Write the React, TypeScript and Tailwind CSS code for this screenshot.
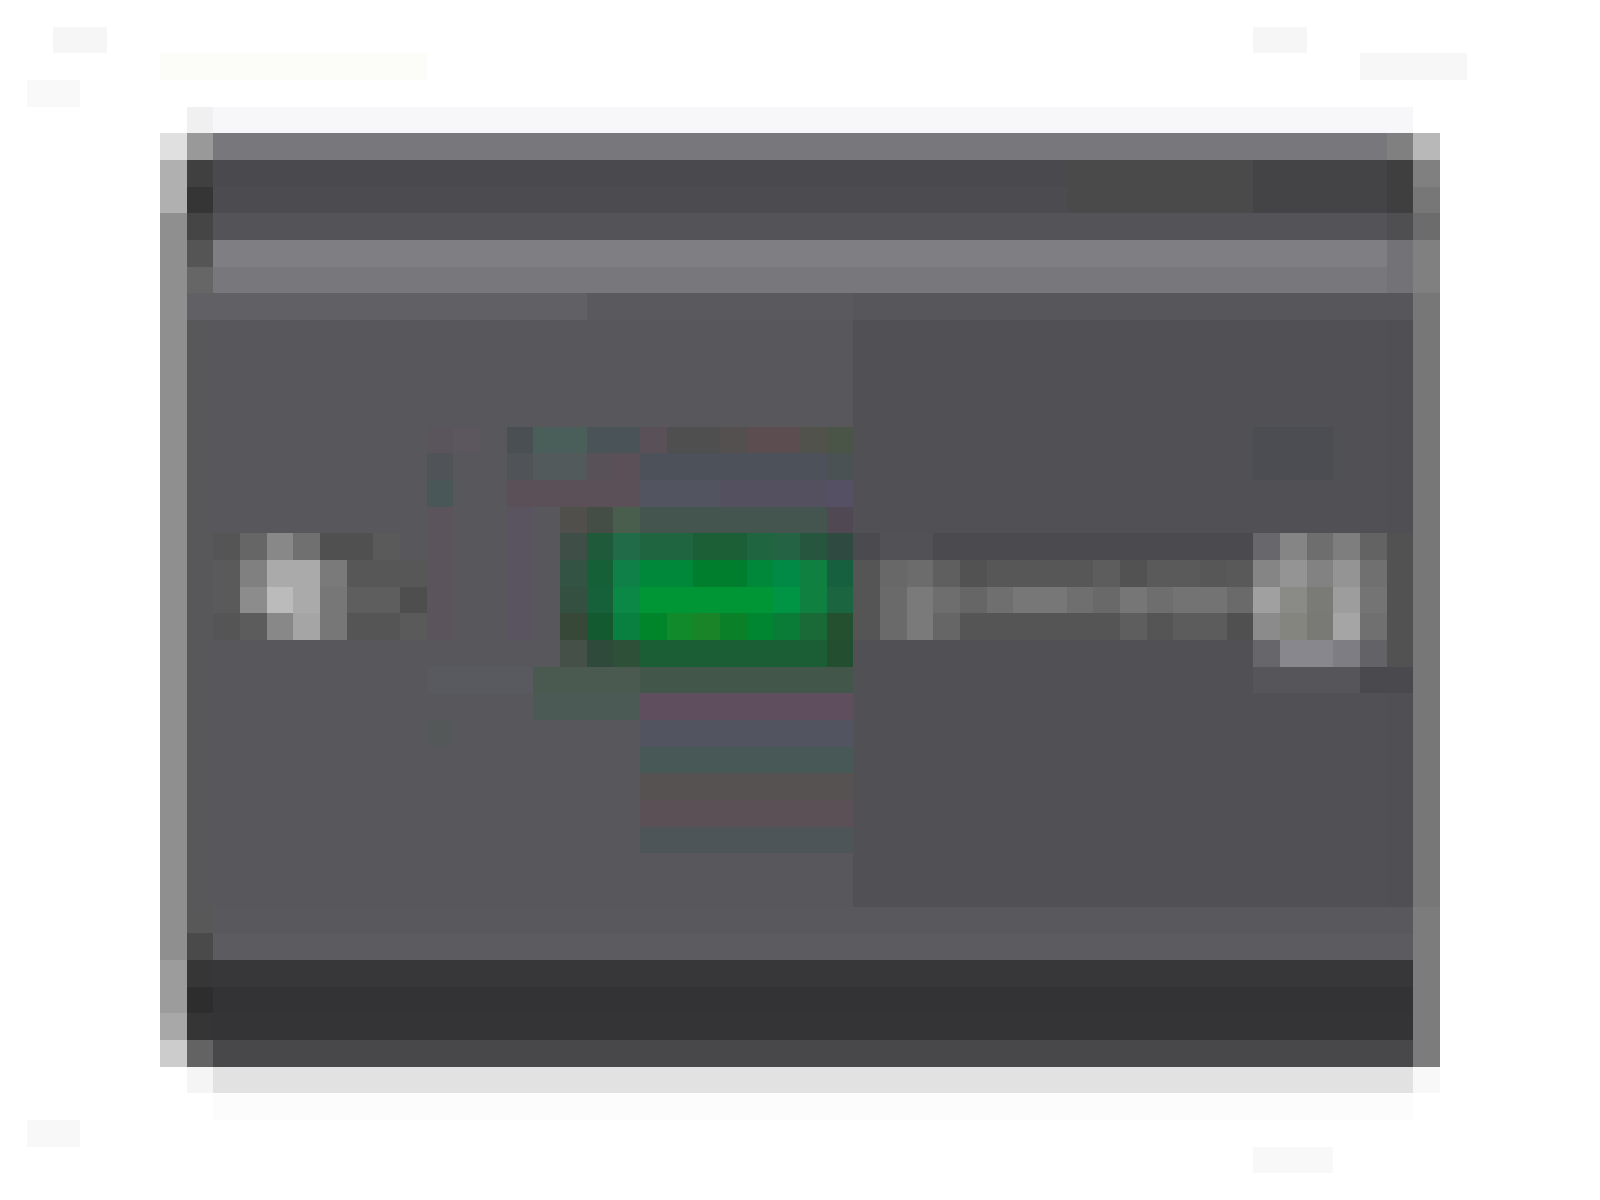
import React from 'react';

// The picture is a 60 x 45 pixel icon blown up to 1600 x 1200,
// so every "pixel" is one cell of a 60 x 45 grid.
const cells: string[] = [
    // faint specks on the white page
    'col-[3/5] row-[2/3] bg-[#f6f6f6]',
    'col-[7/17] row-[3/4] bg-[#fcfcf9]',
    'col-[2/4] row-[4/5] bg-[#f9f9f9]',
    'col-[48/50] row-[2/3] bg-[#f6f6f6]',
    'col-[52/56] row-[3/4] bg-[#f7f7f7]',
    'col-[8/54] row-[5/6] bg-[#f7f7f9]',
    'col-[8/9] row-[5/6] bg-[#f0f0f0]',
    'col-[2/4] row-[43/44] bg-[#f8f8f8]',
    'col-[48/51] row-[44/45] bg-[#f8f8f8]',

    // frame body
    'col-[7/55] row-[6/41] bg-[#56555a]',

    // top edge and title bar
    'col-[8/54] row-[6/7] bg-[#78777c]',
    'col-[8/53] row-[7/8] bg-[#4a4a4e]',
    'col-[8/53] row-[8/9] bg-[#4c4c50]',
    'col-[41/48] row-[7/9] bg-[#4a4a4b]',
    'col-[48/53] row-[7/9] bg-[#444446]',
    'col-[8/53] row-[9/10] bg-[#545358]',
    'col-[8/53] row-[10/11] bg-[#7f7e83]',
    'col-[8/53] row-[11/12] bg-[#78777c]',
    'col-[8/23] row-[12/13] bg-[#606065]',
    'col-[23/33] row-[12/13] bg-[#5a5a5e]',
    'col-[33/54] row-[12/13] bg-[#57575b]',

    // main panel
    'col-[8/33] row-[13/35] bg-[#58585c]',
    'col-[33/54] row-[13/35] bg-[#505055]',

    // bottom bands
    'col-[8/54] row-[35/36] bg-[#59595d]',
    'col-[8/54] row-[36/37] bg-[#5c5c60]',
    'col-[8/54] row-[37/38] bg-[#37373a]',
    'col-[8/54] row-[38/39] bg-[#333336]',
    'col-[8/54] row-[39/40] bg-[#343437]',
    'col-[8/54] row-[40/41] bg-[#48484b]',

    // shadow under the frame
    'col-[9/54] row-[41/42] bg-[#e2e2e2]',
    'col-[8/9] row-[41/42] bg-[#f5f5f5]',
    'col-[9/54] row-[42/43] bg-[#fcfcfc]',

    // left outer edge
    'col-[7/8] row-[6/41] bg-[#8f8f8f]',
    'col-[7/8] row-[6/7] bg-[#e0e0e0]',
    'col-[7/8] row-[7/9] bg-[#b0b0b0]',
    'col-[7/8] row-[37/39] bg-[#9c9c9c]',
    'col-[7/8] row-[39/40] bg-[#a8a8a8]',
    'col-[7/8] row-[40/41] bg-[#cccccc]',

    // left inner edge
    'col-[8/9] row-[13/35] bg-[#58585a]',
    'col-[8/9] row-[6/7] bg-[#999999]',
    'col-[8/9] row-[7/8] bg-[#404040]',
    'col-[8/9] row-[8/9] bg-[#353535]',
    'col-[8/9] row-[9/10] bg-[#454545]',
    'col-[8/9] row-[10/11] bg-[#555555]',
    'col-[8/9] row-[11/12] bg-[#666666]',
    'col-[8/9] row-[35/36] bg-[#585858]',
    'col-[8/9] row-[36/37] bg-[#4a4a4a]',
    'col-[8/9] row-[37/38] bg-[#363636]',
    'col-[8/9] row-[38/39] bg-[#2d2d2d]',
    'col-[8/9] row-[39/40] bg-[#353535]',
    'col-[8/9] row-[40/41] bg-[#636363]',

    // right inner edge
    'col-[53/54] row-[6/7] bg-[#808080]',
    'col-[53/54] row-[7/9] bg-[#3f3f3f]',
    'col-[53/54] row-[9/10] bg-[#4f4f51]',
    'col-[53/54] row-[10/12] bg-[#737276]',
    'col-[53/54] row-[13/35] bg-[#505054]',

    // right outer edge
    'col-[54/55] row-[6/41] bg-[#777777]',
    'col-[54/55] row-[6/7] bg-[#b8b8b8]',
    'col-[54/55] row-[7/8] bg-[#808080]',
    'col-[54/55] row-[9/10] bg-[#6c6c6c]',
    'col-[54/55] row-[10/12] bg-[#808080]',
    'col-[54/55] row-[35/41] bg-[#7c7c7c]',
    'col-[54/55] row-[41/42] bg-[#f8f8f8]',

    // halo above the green block
    'col-[17/18] row-[17/18] bg-[#5a545c]',
    'col-[18/19] row-[17/18] bg-[#5c565e]',
    'col-[20/21] row-[17/18] bg-[#4a4f53]',
    'col-[21/23] row-[17/18] bg-[#4a5e5a]',
    'col-[23/25] row-[17/18] bg-[#4a5458]',
    'col-[25/26] row-[17/18] bg-[#5a5058]',
    'col-[26/28] row-[17/18] bg-[#4f4f4f]',
    'col-[28/29] row-[17/18] bg-[#555050]',
    'col-[29/31] row-[17/18] bg-[#5c4e50]',
    'col-[31/32] row-[17/18] bg-[#52524c]',
    'col-[32/33] row-[17/18] bg-[#4a5548]',
    'col-[17/18] row-[18/19] bg-[#505459]',
    'col-[20/21] row-[18/19] bg-[#505458]',
    'col-[21/23] row-[18/19] bg-[#525a5c]',
    'col-[23/24] row-[18/19] bg-[#585258]',
    'col-[24/25] row-[18/19] bg-[#5c5058]',
    'col-[25/32] row-[18/19] bg-[#4d5159]',
    'col-[32/33] row-[18/19] bg-[#4a5254]',
    'col-[17/18] row-[19/20] bg-[#4a5758]',
    'col-[20/25] row-[19/20] bg-[#5c5058]',
    'col-[25/28] row-[19/20] bg-[#525560]',
    'col-[28/32] row-[19/20] bg-[#545060]',
    'col-[32/33] row-[19/20] bg-[#565065]',
    'col-[17/18] row-[20/25] bg-[#5c545c]',
    'col-[20/21] row-[20/25] bg-[#5a5460]',

    // green block
    'col-[22/23] row-[20/21] bg-[#504f4c]',
    'col-[23/24] row-[20/21] bg-[#454d47]',
    'col-[24/25] row-[20/21] bg-[#4a5e4e]',
    'col-[25/32] row-[20/21] bg-[#445550]',
    'col-[32/33] row-[20/21] bg-[#504853]',

    'col-[22/23] row-[21/22] bg-[#3f4f47]',
    'col-[23/24] row-[21/22] bg-[#1f5a3b]',
    'col-[24/25] row-[21/22] bg-[#226b48]',
    'col-[25/27] row-[21/22] bg-[#1e6540]',
    'col-[27/29] row-[21/22] bg-[#1c5e35]',
    'col-[29/30] row-[21/22] bg-[#1f6640]',
    'col-[30/31] row-[21/22] bg-[#246445]',
    'col-[31/32] row-[21/22] bg-[#27563f]',
    'col-[32/33] row-[21/22] bg-[#2f4a40]',

    'col-[22/23] row-[22/23] bg-[#335444]',
    'col-[23/24] row-[22/23] bg-[#166038]',
    'col-[24/25] row-[22/23] bg-[#0e8048]',
    'col-[25/27] row-[22/23] bg-[#00883a]',
    'col-[27/29] row-[22/23] bg-[#007e2d]',
    'col-[29/30] row-[22/23] bg-[#00883a]',
    'col-[30/31] row-[22/23] bg-[#008a45]',
    'col-[31/32] row-[22/23] bg-[#108040]',
    'col-[32/33] row-[22/23] bg-[#166040]',

    'col-[22/23] row-[23/24] bg-[#335040]',
    'col-[23/24] row-[23/24] bg-[#16603a]',
    'col-[24/25] row-[23/24] bg-[#0b8845]',
    'col-[25/30] row-[23/24] bg-[#009535]',
    'col-[30/31] row-[23/24] bg-[#009545]',
    'col-[31/32] row-[23/24] bg-[#108040]',
    'col-[32/33] row-[23/24] bg-[#1b6640]',

    'col-[22/23] row-[24/25] bg-[#384838]',
    'col-[23/24] row-[24/25] bg-[#135a30]',
    'col-[24/25] row-[24/25] bg-[#0a8040]',
    'col-[25/26] row-[24/25] bg-[#00852a]',
    'col-[26/27] row-[24/25] bg-[#108a2a]',
    'col-[27/28] row-[24/25] bg-[#1a8528]',
    'col-[28/29] row-[24/25] bg-[#0a8028]',
    'col-[29/30] row-[24/25] bg-[#008530]',
    'col-[30/31] row-[24/25] bg-[#0a7c38]',
    'col-[31/32] row-[24/25] bg-[#1a6a38]',
    'col-[32/33] row-[24/25] bg-[#245030]',

    'col-[22/23] row-[25/26] bg-[#455048]',
    'col-[23/24] row-[25/26] bg-[#2f4a3a]',
    'col-[24/25] row-[25/26] bg-[#2e5038]',
    'col-[25/32] row-[25/26] bg-[#1b5e35]',
    'col-[32/33] row-[25/26] bg-[#234f30]',

    // halo below the green block
    'col-[17/21] row-[26/27] bg-[#585a60]',
    'col-[21/25] row-[26/27] bg-[#4a5a50]',
    'col-[25/33] row-[26/27] bg-[#42574a]',
    'col-[21/25] row-[27/28] bg-[#4c5a55]',
    'col-[25/33] row-[27/28] bg-[#5e4e5e]',
    'col-[17/18] row-[28/29] bg-[#545858]',
    'col-[25/33] row-[28/29] bg-[#525560]',
    'col-[25/33] row-[29/30] bg-[#485856]',
    'col-[25/33] row-[30/31] bg-[#575252]',
    'col-[25/33] row-[31/32] bg-[#5a5055]',
    'col-[25/33] row-[32/33] bg-[#4e5558]',

    // left knob
    'col-[9/10] row-[21/22] bg-[#555555]',
    'col-[10/11] row-[21/22] bg-[#666666]',
    'col-[11/12] row-[21/22] bg-[#888888]',
    'col-[12/13] row-[21/22] bg-[#707070]',
    'col-[13/15] row-[21/22] bg-[#505050]',
    'col-[15/16] row-[21/22] bg-[#5a5a5a]',
    'col-[9/10] row-[22/23] bg-[#5a5a5a]',
    'col-[10/11] row-[22/23] bg-[#808080]',
    'col-[11/13] row-[22/23] bg-[#aaaaaa]',
    'col-[13/14] row-[22/23] bg-[#7a7a7a]',
    'col-[14/17] row-[22/23] bg-[#575757]',
    'col-[9/10] row-[23/24] bg-[#5a5a5a]',
    'col-[10/11] row-[23/24] bg-[#8c8c8c]',
    'col-[11/12] row-[23/24] bg-[#bbbbbb]',
    'col-[12/13] row-[23/24] bg-[#aaaaaa]',
    'col-[13/14] row-[23/24] bg-[#777777]',
    'col-[14/16] row-[23/24] bg-[#5e5e5e]',
    'col-[16/17] row-[23/24] bg-[#4e4e4e]',
    'col-[9/10] row-[24/25] bg-[#555555]',
    'col-[10/11] row-[24/25] bg-[#5c5c5c]',
    'col-[11/12] row-[24/25] bg-[#888888]',
    'col-[12/13] row-[24/25] bg-[#a5a5a5]',
    'col-[13/14] row-[24/25] bg-[#777777]',
    'col-[14/16] row-[24/25] bg-[#555555]',
    'col-[16/17] row-[24/25] bg-[#5a5a5a]',

    // slider track
    'col-[33/48] row-[21/22] bg-[#4b4b4f]',
    'col-[34/36] row-[21/22] bg-[#525256]',
    'col-[33/34] row-[22/25] bg-[#555555]',
    'col-[34/35] row-[22/23] bg-[#686868]',
    'col-[35/36] row-[22/23] bg-[#6c6c6c]',
    'col-[36/37] row-[22/23] bg-[#5f5f5f]',
    'col-[37/38] row-[22/23] bg-[#525252]',
    'col-[38/42] row-[22/23] bg-[#575757]',
    'col-[42/43] row-[22/23] bg-[#5d5d5d]',
    'col-[43/44] row-[22/23] bg-[#525252]',
    'col-[44/46] row-[22/23] bg-[#5a5a5a]',
    'col-[46/47] row-[22/23] bg-[#575757]',
    'col-[47/48] row-[22/23] bg-[#595959]',
    'col-[34/35] row-[23/24] bg-[#6a6a6a]',
    'col-[35/36] row-[23/24] bg-[#7a7a7a]',
    'col-[36/37] row-[23/24] bg-[#6e6e6e]',
    'col-[37/38] row-[23/24] bg-[#666666]',
    'col-[38/39] row-[23/24] bg-[#6f6f6f]',
    'col-[39/41] row-[23/24] bg-[#777777]',
    'col-[41/42] row-[23/24] bg-[#6f6f6f]',
    'col-[42/43] row-[23/24] bg-[#696969]',
    'col-[43/44] row-[23/24] bg-[#767676]',
    'col-[44/45] row-[23/24] bg-[#6e6e6e]',
    'col-[45/47] row-[23/24] bg-[#737373]',
    'col-[47/48] row-[23/24] bg-[#6a6a6a]',
    'col-[34/35] row-[24/25] bg-[#6a6a6a]',
    'col-[35/36] row-[24/25] bg-[#7a7a7a]',
    'col-[36/37] row-[24/25] bg-[#666666]',
    'col-[37/43] row-[24/25] bg-[#555555]',
    'col-[43/44] row-[24/25] bg-[#5e5e5e]',
    'col-[44/45] row-[24/25] bg-[#555555]',
    'col-[45/47] row-[24/25] bg-[#5c5c5c]',
    'col-[47/48] row-[24/25] bg-[#505050]',

    // right knob
    'col-[48/51] row-[17/19] bg-[#4c4c53]',
    'col-[48/49] row-[21/22] bg-[#68686c]',
    'col-[49/50] row-[21/22] bg-[#858585]',
    'col-[50/51] row-[21/22] bg-[#6e6e6e]',
    'col-[51/52] row-[21/22] bg-[#7e7e7e]',
    'col-[52/53] row-[21/22] bg-[#636363]',
    'col-[48/49] row-[22/23] bg-[#858585]',
    'col-[49/50] row-[22/23] bg-[#949494]',
    'col-[50/51] row-[22/23] bg-[#828282]',
    'col-[51/52] row-[22/23] bg-[#949494]',
    'col-[52/53] row-[22/23] bg-[#707070]',
    'col-[48/49] row-[23/24] bg-[#a0a0a0]',
    'col-[49/50] row-[23/24] bg-[#8a8a86]',
    'col-[50/51] row-[23/24] bg-[#7a7a76]',
    'col-[51/52] row-[23/24] bg-[#9d9d9d]',
    'col-[52/53] row-[23/24] bg-[#747474]',
    'col-[48/49] row-[24/25] bg-[#8b8b8b]',
    'col-[49/50] row-[24/25] bg-[#858580]',
    'col-[50/51] row-[24/25] bg-[#797975]',
    'col-[51/52] row-[24/25] bg-[#a5a5a5]',
    'col-[52/53] row-[24/25] bg-[#707070]',
    'col-[48/49] row-[25/26] bg-[#67676b]',
    'col-[49/51] row-[25/26] bg-[#88878d]',
    'col-[51/52] row-[25/26] bg-[#7e7d83]',
    'col-[52/53] row-[25/26] bg-[#626267]',
    'col-[53/54] row-[21/26] bg-[#525252]',
    'col-[48/53] row-[26/27] bg-[#56555a]',
    'col-[52/54] row-[26/27] bg-[#4a494e]',
];

const App: React.FC = () => {
    return (
        <div className="grid h-[1200px] w-[1600px] grid-cols-[repeat(60,minmax(0,1fr))] grid-rows-[repeat(45,minmax(0,1fr))] bg-white">
            {cells.map((cls, i) => (
                <div key={i} className={cls} />
            ))}
        </div>
    );
};

export default App;
